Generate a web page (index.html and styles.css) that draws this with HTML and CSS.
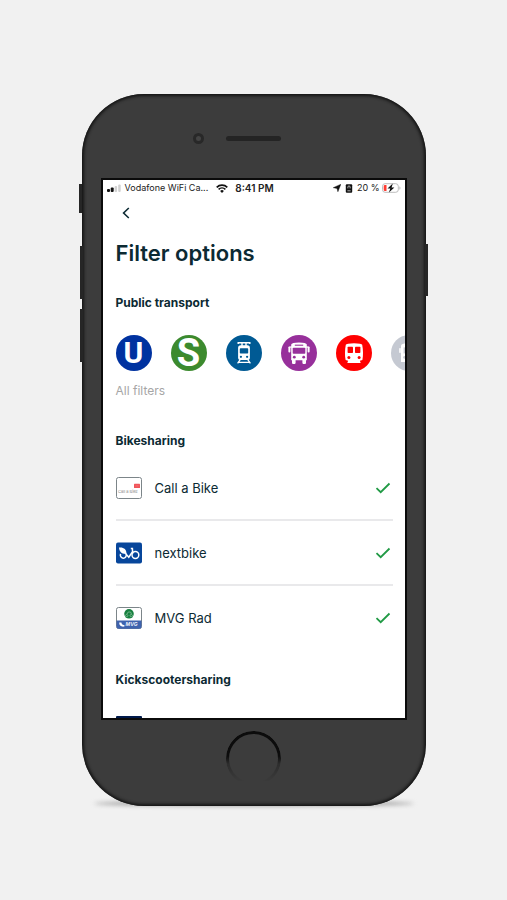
FILE: index.html
```html
<!DOCTYPE html>
<html lang="en">
<head>
    <meta charset="UTF-8">
    <meta name="viewport" content="width=device-width, initial-scale=1.0">
    <title>Filter options</title>
    <link rel="stylesheet" href="styles.css">
</head>
<body>
    <div class="phone">
        <!-- Side buttons -->
        <span class="side-button mute"></span>
        <span class="side-button volume-up"></span>
        <span class="side-button volume-down"></span>
        <span class="side-button power"></span>

        <div class="phone-top">
            <span class="camera"></span>
            <span class="speaker"></span>
        </div>

        <div class="screen">
            <!-- Status bar -->
            <div class="status-bar">
                <svg class="signal" viewBox="0 0 14 9" aria-hidden="true">
                    <rect x="0" y="5" width="3" height="3" rx="1" fill="#111"/>
                    <rect x="3.7" y="3.5" width="3" height="4.5" rx="1" fill="#111"/>
                    <rect x="7.6" y="2" width="2.5" height="6" rx="1" fill="#d2d2d2"/>
                    <rect x="11.2" y="0.5" width="2.5" height="7.5" rx="1" fill="#d2d2d2"/>
                </svg>
                <span>Vodafone WiFi Ca...</span>
                <svg class="wifi" viewBox="0 0 12 9" aria-hidden="true">
                    <path d="M0.7 3.3a7.6 7.6 0 0 1 10.6 0" fill="none" stroke="#111" stroke-width="1.7"/>
                    <path d="M2.6 5.4a4.9 4.9 0 0 1 6.8 0" fill="none" stroke="#111" stroke-width="1.6"/>
                    <path d="M4.1 6.9a2.7 2.7 0 0 1 3.8 0L6 8.9z" fill="#111"/>
                </svg>
                <span class="clock">8:41 PM</span>
                <div class="status-right">
                    <svg class="location" viewBox="0 0 8 8" aria-hidden="true">
                        <path d="M7.9 0.2 4.9 7.8 4 4.4 0.2 3.7z" fill="#111" stroke="#111" stroke-width="0.4"/>
                    </svg>
                    <svg class="lock" viewBox="0 0 8 9" aria-hidden="true">
                        <rect x="0.8" y="0.3" width="6.4" height="8.4" rx="1" fill="#111"/>
                        <path d="M2.9 4.4V3a1.1 1.1 0 0 1 2.2 0v1.4M2.4 6.8h3.2" fill="none" stroke="#ddd" stroke-width="0.8"/>
                    </svg>
                    <span>20 %</span>
                    <svg class="battery" viewBox="0 0 19 10" aria-hidden="true">
                        <rect x="0.5" y="0.7" width="15.8" height="8.6" rx="2.6" fill="#fff" stroke="#b5b5b5" stroke-width="0.9"/>
                        <path d="M17.4 3.2v3.6c1.4-.5 1.4-3.1 0-3.6z" fill="#b5b5b5"/>
                        <path d="M3 1.9h1.5v6.2H3a1.3 1.3 0 0 1-1.3-1.3V3.2A1.3 1.3 0 0 1 3 1.9z" fill="#ff3b30"/>
                        <path d="M10.8 0.5 5.5 5.5h2.8L6.9 9.6l5.5-5.2H9.6z" fill="#111"/>
                    </svg>
                </div>
            </div>

            <div class="content">
                <button class="back" type="button" aria-label="Back">
                    <svg viewBox="0 0 8 12" aria-hidden="true">
                        <path d="M6.8 1 1.6 6l5.2 5" fill="none" stroke="#0c2a33" stroke-width="1.6"/>
                    </svg>
                </button>

                <h1>Filter options</h1>

                <h2>Public transport</h2>
                <div class="transport">
                    <button class="chip ubahn" type="button">U</button>
                    <button class="chip sbahn" type="button">S</button>
                    <button class="chip tram" type="button" aria-label="Tram">
                        <svg viewBox="0 0 36 36" fill="none" aria-hidden="true">
                            <path d="M12.2 9V7.7h11.6V9M16 8v3M20 8v3" stroke="#fff" stroke-width="1.4"/>
                            <rect x="12.1" y="10.3" width="11.8" height="14.8" rx="2.6" fill="#fff"/>
                            <rect x="13.8" y="13.2" width="8.4" height="5.2" rx="0.7" fill="#005a94"/>
                            <circle cx="14.9" cy="21.8" r="1.1" fill="#005a94"/>
                            <circle cx="21.1" cy="21.8" r="1.1" fill="#005a94"/>
                            <path d="M14.2 24.6l-2.6 3.8M21.8 24.6l2.6 3.8M12.5 27.4h11" stroke="#fff" stroke-width="1.3"/>
                        </svg>
                    </button>
                    <button class="chip bus" type="button" aria-label="Bus">
                        <svg viewBox="0 0 36 36" aria-hidden="true">
                            <path d="M10.2 9.4Q10.6 7.4 18 7.4t7.8 2v15.8H10.2z" fill="#fff"/>
                            <rect x="7.4" y="11.4" width="2" height="6" rx="0.9" fill="#fff"/>
                            <rect x="26.6" y="11.4" width="2" height="6" rx="0.9" fill="#fff"/>
                            <path d="M8.6 12h18.8" stroke="#fff" stroke-width="1.2"/>
                            <rect x="11" y="24" width="3.6" height="4.9" rx="0.8" fill="#fff"/>
                            <rect x="21.4" y="24" width="3.6" height="4.9" rx="0.8" fill="#fff"/>
                            <path d="M13.8 10.2h8.4" stroke="#97309b" stroke-width="1.1"/>
                            <rect x="11.7" y="12.7" width="12.6" height="6" rx="0.8" fill="#97309b"/>
                            <circle cx="13.3" cy="22.2" r="1.4" fill="#97309b"/>
                            <circle cx="22.7" cy="22.2" r="1.4" fill="#97309b"/>
                        </svg>
                    </button>
                    <button class="chip train" type="button" aria-label="Regional train">
                        <svg viewBox="0 0 36 36" aria-hidden="true">
                            <path d="M9.8 9.8Q10.2 8.2 18 8.2t8.2 1.6c1 5 1.1 11.2.2 15.2l-2.5.7.8 2.4H11.3l.8-2.4-2.5-.7c-.9-4-.8-10.2.2-15.2z" fill="#fff"/>
                            <rect x="11.6" y="11.7" width="5.4" height="6.3" rx="0.7" fill="#f00"/>
                            <rect x="19" y="11.7" width="5.4" height="6.3" rx="0.7" fill="#f00"/>
                            <circle cx="12.9" cy="22.4" r="1.5" fill="#f00"/>
                            <circle cx="23.1" cy="22.4" r="1.5" fill="#f00"/>
                        </svg>
                    </button>
                    <button class="chip other" type="button" aria-label="Other transport">
                        <svg viewBox="0 0 36 36" aria-hidden="true">
                            <path d="M10 10.4Q10.4 8.2 18 8.2t8 2.2V27H10z" fill="#fff"/>
                            <rect x="8.2" y="13" width="1.6" height="5" rx="0.8" fill="#fff"/>
                            <rect x="12.6" y="12.4" width="11" height="6" fill="#c5c9d2"/>
                            <circle cx="13.6" cy="22.4" r="1.4" fill="#c5c9d2"/>
                        </svg>
                    </button>
                </div>
                <a class="all-filters" href="#">All filters</a>

                <h2>Bikesharing</h2>
                <div class="providers">
                    <label class="provider">
                        <svg class="logo" viewBox="0 0 26 22" aria-hidden="true">
                            <rect x="0.5" y="0.5" width="25" height="21" rx="2" fill="#fff" stroke="#7c8589"/>
                            <rect x="18" y="6.8" width="6" height="4.2" rx="0.6" fill="#f0545a"/>
                            <path d="M19.4 8.9h3.2" stroke="#f47a7e" stroke-width="0.8"/>
                            <text class="tiny" x="2" y="15.5">Call a Bike</text>
                        </svg>
                        <span>Call a Bike</span>
                        <input type="checkbox" checked>
                    </label>
                    <label class="provider">
                        <svg class="logo" viewBox="0 0 26 22" aria-hidden="true">
                            <rect x="0" y="0.5" width="26" height="21" rx="2" fill="#07469b"/>
                            <path d="M3 5.6c5-.4 7.4 1.6 7.6 6.4-4.8.4-7.2-1.9-7.6-6.4z" fill="#fff"/>
                            <g fill="none" stroke="#fff" stroke-width="1.5">
                                <path d="M4.6 11.9a3 3 0 1 0 5.6.4M9.5 11.5l3.3 3.7 3.6-5.4"/>
                                <circle cx="19.4" cy="13" r="3.4"/>
                                <path d="M16.7 11.6 16.4 6.6h-1.6"/>
                            </g>
                        </svg>
                        <span>nextbike</span>
                        <input type="checkbox" checked>
                    </label>
                    <label class="provider">
                        <svg class="logo" viewBox="0 0 26 22" aria-hidden="true">
                            <rect x="0.5" y="0.5" width="25" height="21" rx="2" fill="#fff" stroke="#7c8589"/>
                            <path d="M0.5 13.5h25v6.2a2 2 0 0 1-2 2h-21a2 2 0 0 1-2-2z" fill="#3f63ae"/>
                            <circle cx="13" cy="6.8" r="4.8" fill="#17803f"/>
                            <path d="M10.6 7.4a1.2 1.2 0 1 0 .1 0M15.2 7.4a1.2 1.2 0 1 0 .1 0M11 7l1.2-2h2.4l.8 2" fill="none" stroke="#a5d3b3" stroke-width="0.6"/>
                            <path d="M3.2 15.6c-.2 3 2 4.6 5.2 4v-1.6c-1.8.2-2.8-.6-3-2.4z" fill="#fff"/>
                            <text class="mvg" x="9.5" y="19.2">MVG</text>
                        </svg>
                        <span>MVG Rad</span>
                        <input type="checkbox" checked>
                    </label>
                </div>

                <h2>Kickscootersharing</h2>
                <div class="providers">
                    <div class="provider">
                        <svg class="logo" viewBox="0 0 26 22" aria-hidden="true">
                            <rect width="26" height="22" rx="1" fill="#001a4b"/>
                        </svg>
                    </div>
                </div>
            </div>
        </div>

        <div class="phone-bottom">
            <span class="home"></span>
        </div>
    </div>
</body>
</html>
```
FILE: styles.css
```css
* {
    box-sizing: border-box;
}

body {
    margin: 0;
    min-height: 100vh;
    display: flex;
    justify-content: center;
    align-items: center;
    background: #f1f1f1;
    font-family: Inter, "Liberation Sans", sans-serif;
    color: #0c2a33;
}

/* Phone body */
.phone {
    position: relative;
    width: 90%;
    max-width: 344px;
    padding: 0 19px;
    border-radius: 62px;
    background: #3c3c3c;
    box-shadow: inset 0 0 3px 2px #161616;
}

/* Soft shadow under the phone */
.phone::before {
    content: "";
    position: absolute;
    z-index: -1;
    left: 12px;
    right: 12px;
    bottom: 0;
    height: 5px;
    border-radius: 50%;
    background: #999;
    filter: blur(2px);
}

.phone-top {
    height: 84px;
    padding-top: 4px;
    display: grid;
    grid-template-columns: 1fr 55px 1fr;
    align-items: center;
}

.camera {
    width: 11px;
    height: 11px;
    margin-right: 22px;
    justify-self: end;
    border: 3px solid #282828;
    border-radius: 50%;
    background: #444;
}

.speaker {
    height: 5px;
    border-radius: 3px;
    background: #242424;
}

.phone-bottom {
    height: 86px;
    display: flex;
    justify-content: center;
    align-items: flex-start;
    padding-top: 11px;
}

.home {
    width: 55px;
    height: 55px;
    border: 3px solid #0c0c0c;
    border-radius: 50%;
    mask-image: linear-gradient(#000 45%, rgba(0, 0, 0, 0.3) 60%, transparent 92%);
}

.side-button {
    position: absolute;
    width: 3px;
    background: #262626;
}

.mute {
    left: -3px;
    top: 90px;
    height: 29px;
}

.volume-up {
    left: -2px;
    top: 152px;
    height: 53px;
}

.volume-down {
    left: -2px;
    top: 215px;
    height: 53px;
}

.power {
    right: -2px;
    top: 150px;
    height: 52px;
}

/* Screen */
.screen {
    aspect-ratio: 306 / 542;
    overflow: hidden;
    border: 2px solid #0b0b0b;
    background: #fff;
}

.status-bar {
    display: flex;
    align-items: center;
    height: 16px;
    padding: 0 4px;
    font-size: 9px;
    line-height: 16px;
    white-space: nowrap;
    color: #222;
}

.signal {
    width: 14px;
    height: 9px;
    margin-right: 4px;
}

.wifi {
    width: 12px;
    height: 9px;
    margin: 0 7px 0 8px;
}

.clock {
    font-size: 10px;
    font-weight: 600;
}

.status-right {
    display: flex;
    align-items: center;
    gap: 4px;
    margin-left: auto;
}

.location {
    width: 8px;
    height: 8px;
}

.lock {
    width: 8px;
    height: 9px;
}

.battery {
    width: 19px;
    height: 10px;
    margin-left: -2px;
}

.content {
    padding: 0 12px 0 13px;
}

.back {
    display: flex;
    align-items: center;
    width: 24px;
    height: 34px;
    padding: 0 0 0 6px;
    border: none;
    background: none;
    cursor: pointer;
}

.back svg {
    width: 8px;
    height: 12px;
}

h1 {
    margin: 9px 0 26px;
    font-size: 22px;
    font-weight: 600;
    line-height: 28px;
}

h2 {
    margin: 0;
    font-size: 12px;
    font-weight: 700;
    line-height: 20px;
}

.transport {
    display: flex;
    gap: 19px;
    margin: 22px 0 12px;
}

.chip {
    flex: none;
    width: 36px;
    height: 36px;
    padding: 0;
    border: none;
    border-radius: 50%;
    font-weight: 700;
    line-height: 36px;
    text-align: center;
    color: #fff;
    cursor: pointer;
}

.chip svg {
    display: block;
    width: 36px;
    height: 36px;
}

.ubahn {
    background: #0032a0;
    font-family: Roboto, sans-serif;
    font-size: 30px;
}

.sbahn {
    background: #3c8a2e;
    font-family: Roboto, sans-serif;
    font-size: 38px;
}

.tram {
    background: #005a94;
}

.bus {
    background: #97309b;
}

.train {
    background: #f00;
}

.other {
    background: #c5c9d2;
}

.all-filters {
    display: block;
    margin-bottom: 32px;
    font-size: 12px;
    line-height: 16px;
    text-decoration: none;
    color: #a6a6a6;
}

.providers {
    margin: 5px 0 20px;
}

.provider {
    display: flex;
    align-items: center;
    gap: 13px;
    height: 65px;
    border-bottom: 2px solid #e9e9eb;
    font-size: 13px;
    line-height: 20px;
}

.provider:last-child {
    height: 64px;
    border-bottom: none;
}

.logo {
    width: 26px;
    height: 22px;
}

.tiny {
    font-size: 4px;
    fill: #8a8a8a;
}

.mvg {
    font-size: 5px;
    font-weight: 700;
    font-style: italic;
    fill: #e6ecf8;
}

.provider input {
    appearance: none;
    width: 16px;
    height: 12px;
    margin: 0 2px 0 auto;
    cursor: pointer;
}

.provider input:checked {
    background: url("data:image/svg+xml,%3Csvg xmlns='http://www.w3.org/2000/svg' viewBox='0 0 16 12'%3E%3Cpath d='M1.5 6.2l4.2 4L14.5 1.5' fill='none' stroke='%23219a45' stroke-width='1.8'/%3E%3C/svg%3E") no-repeat;
}
```
